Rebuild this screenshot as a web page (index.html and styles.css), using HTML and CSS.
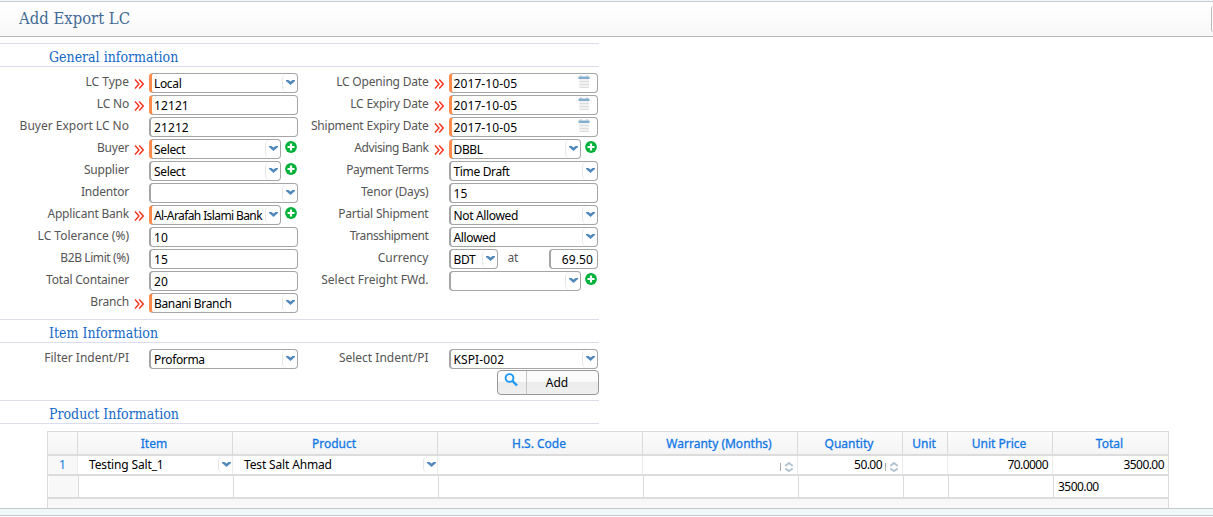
FILE: index.html
```
<!DOCTYPE html>
<html lang="en">
<head>
    <meta charset="UTF-8">
    <title>Add Export LC</title>
    <link rel="stylesheet" href="styles.css">
</head>
<body>

<!-- shared icons -->
<svg class="sprite">
    <symbol id="req" viewBox="0 0 10 10"><path d="M1 .5L5 5 1 9.500M5.200 .5l4 4.500-4 4.500" fill="none" stroke="#f8301c" stroke-width="1.400"/></symbol>
    <symbol id="arrow" viewBox="0 0 9 5"><path d="M0 0h2.500l2 1.500 2-1.500H9v1L4.500 5 0 1z" fill="#5289bd"/></symbol>
    <symbol id="plus" viewBox="0 0 12 12"><circle cx="6" cy="6" r="5.900" fill="#00b038"/><path d="M6 2.500v7M2.500 6h7" stroke="#fff" stroke-width="2.200"/></symbol>
    <symbol id="cal" viewBox="0 0 12 13"><path d="M1 3h10v10H1z" fill="#f1f1f1"/><path d="M.5 1.500h11V4H.5z" fill="#84afcc"/><path d="M2 .5h2v1H2zM8 .5h2v1H8z" fill="#a9bccb"/><path d="M2 6.500h9M2 9.500h9M2 12.500h9" stroke="#dcdddd"/></symbol>
    <symbol id="spin" viewBox="0 0 9 10"><path d="M.8 4L4.500 1l3.700 3M.8 6.500l3.700 2.500 3.700-2.500" fill="none" stroke="#b4c3d0" stroke-width="2"/></symbol>
</svg>

<div class="header">
    <h1>Add Export LC</h1>
    <span class="header-btn"></span>
</div>

<div class="form">
    <h2>General information</h2>
    <div class="columns">
        <div class="col">
            <div class="row"><label class="wide">LC Type</label><svg class="req"><use href="#req"/></svg><div class="field must"><span>Local</span><i class="drop"><svg><use href="#arrow"/></svg></i></div></div>
            <div class="row"><label>LC No</label><svg class="req"><use href="#req"/></svg><div class="field must num"><span>12121</span></div></div>
            <div class="row"><label class="wide">Buyer Export LC No</label><div class="field num"><span>21212</span></div></div>
            <div class="row"><label>Buyer</label><svg class="req"><use href="#req"/></svg><div class="field must short"><span>Select</span><i class="drop"><svg><use href="#arrow"/></svg></i></div><svg class="plus"><use href="#plus"/></svg></div>
            <div class="row"><label>Supplier</label><div class="field short"><span>Select</span><i class="drop"><svg><use href="#arrow"/></svg></i></div><svg class="plus"><use href="#plus"/></svg></div>
            <div class="row"><label>Indentor</label><div class="field"><span></span><i class="drop"><svg><use href="#arrow"/></svg></i></div></div>
            <div class="row"><label>Applicant Bank</label><svg class="req"><use href="#req"/></svg><div class="field must short tight"><span>Al-Arafah Islami Bank</span><i class="drop"><svg><use href="#arrow"/></svg></i></div><svg class="plus"><use href="#plus"/></svg></div>
            <div class="row"><label class="wide">LC Tolerance (%)</label><div class="field num"><span>10</span></div></div>
            <div class="row"><label class="narrow">B2B Limit (%)</label><div class="field num"><span>15</span></div></div>
            <div class="row"><label>Total Container</label><div class="field num"><span>20</span></div></div>
            <div class="row"><label>Branch</label><svg class="req"><use href="#req"/></svg><div class="field must"><span>Banani Branch</span><i class="drop"><svg><use href="#arrow"/></svg></i></div></div>
        </div>
        <div class="col">
            <div class="row"><label>LC Opening Date</label><svg class="req"><use href="#req"/></svg><div class="field must num"><span>2017-10-05</span><svg class="cal"><use href="#cal"/></svg></div></div>
            <div class="row"><label>LC Expiry Date</label><svg class="req"><use href="#req"/></svg><div class="field must num"><span>2017-10-05</span><svg class="cal"><use href="#cal"/></svg></div></div>
            <div class="row"><label>Shipment Expiry Date</label><svg class="req"><use href="#req"/></svg><div class="field must num"><span>2017-10-05</span><svg class="cal"><use href="#cal"/></svg></div></div>
            <div class="row"><label class="narrow">Advising Bank</label><svg class="req"><use href="#req"/></svg><div class="field must short"><span>DBBL</span><i class="drop"><svg><use href="#arrow"/></svg></i></div><svg class="plus"><use href="#plus"/></svg></div>
            <div class="row"><label class="narrow">Payment Terms</label><div class="field"><span>Time Draft</span><i class="drop"><svg><use href="#arrow"/></svg></i></div></div>
            <div class="row"><label>Tenor (Days)</label><div class="field num"><span>15</span></div></div>
            <div class="row"><label>Partial Shipment</label><div class="field"><span>Not Allowed</span><i class="drop"><svg><use href="#arrow"/></svg></i></div></div>
            <div class="row"><label class="narrow">Transshipment</label><div class="field"><span>Allowed</span><i class="drop"><svg><use href="#arrow"/></svg></i></div></div>
            <div class="row"><label class="wide">Currency</label><div class="field currency"><span>BDT</span><i class="drop"><svg><use href="#arrow"/></svg></i></div><label class="at">at</label><div class="field rate num"><span>69.50</span></div></div>
            <div class="row"><label class="wide">Select Freight FWd.</label><div class="field short"><span></span><i class="drop"><svg><use href="#arrow"/></svg></i></div><svg class="plus"><use href="#plus"/></svg></div>
        </div>
    </div>

    <h2>Item Information</h2>
    <div class="columns">
        <div class="col">
            <div class="row"><label class="wide">Filter Indent/PI</label><div class="field"><span>Proforma</span><i class="drop"><svg><use href="#arrow"/></svg></i></div></div>
        </div>
        <div class="col">
            <div class="row"><label class="wide">Select Indent/PI</label><div class="field num"><span>KSPI-002</span><i class="drop"><svg><use href="#arrow"/></svg></i></div></div>
        </div>
    </div>
    <button class="add">
        <span class="add-icon"><svg viewBox="0 0 14 14"><circle cx="5.500" cy="5" r="3.900" fill="none" stroke="#1c98f5" stroke-width="1.900"/><path d="M8.500 8l4.500 4.500" stroke="#1c98f5" stroke-width="2.400"/></svg></span>
        <span class="add-text">Add</span>
    </button>

    <h2>Product Information</h2>
</div>

<div class="grid">
    <div class="line head">
        <div></div><div>Item</div><div>Product</div><div>H.S. Code</div><div>Warranty (Months)</div><div>Quantity</div><div>Unit</div><div>Unit Price</div><div>Total</div>
    </div>
    <div class="line data">
        <div class="no">1</div>
        <div class="pick"><span>Testing Salt_1</span><i class="drop"><svg><use href="#arrow"/></svg></i></div>
        <div class="pick"><span>Test Salt Ahmad</span><i class="drop"><svg><use href="#arrow"/></svg></i></div>
        <div></div>
        <div class="amount"><svg class="spin"><use href="#spin"/></svg></div>
        <div class="amount">50.00<svg class="spin"><use href="#spin"/></svg></div>
        <div></div>
        <div class="amount">70.0000</div>
        <div class="amount">3500.00</div>
    </div>
    <div class="line sum">
        <div></div><div></div><div></div><div></div><div></div><div></div><div></div><div></div><div>3500.00</div>
    </div>
    <div class="pager"></div>
</div>
<div class="footer"></div>

</body>
</html>
```

FILE: styles.css
```
* {
    box-sizing: border-box;
}
body {
    margin: 0;
    height: 517px;
    overflow: hidden;
    background: #fff;
    font-family: "Noto Sans", sans-serif;
    font-size: 12px;
    color: #000;
}
.sprite {
    display: none;
}
svg {
    display: block;
    flex: none;
}
h1, h2 {
    margin: 0;
    font-family: "DejaVu Serif Condensed", "DejaVu Serif", serif;
    font-stretch: condensed;
    font-weight: normal;
}
.header {
    display: flex;
    justify-content: space-between;
    height: 37px;
    border-top: 1px solid #eff8fa;
    border-bottom: 1px solid #b9b9bb;
    background: linear-gradient(#c5cdd0 1px, #fff 1px, #f8f8f9);
}
h1 {
    padding-left: 19px;
    font-size: 16.5px;
    line-height: 35px;
    color: #436a94;
}
.header-btn {
    width: 2px;
    height: 26px;
    margin-top: 5px;
    border-left: 1px solid #bbb;
    border-radius: 4px 0 0 4px;
}

/* form */
.form {
    width: 599px;
    padding-top: 6px;
}
h2 {
    height: 24px;
    padding-left: 49px;
    border-top: 1px solid #dcdcec;
    border-bottom: 1px solid #dcdcec;
    font-size: 14px;
    line-height: 26px;
    color: #1468c7;
}
.columns {
    display: flex;
    padding: 6px 0 4px;
}
.col {
    width: 300px;
}
.row {
    display: flex;
    height: 22px;
}
.row label {
    width: 129px;
    margin-right: 20px;
    text-align: right;
    white-space: nowrap;
    line-height: 18px;
    letter-spacing: -0.2px;
    color: #555;
}
.row .wide {
    letter-spacing: 0;
}
.row .narrow {
    letter-spacing: -0.4px;
}
.req {
    width: 10px;
    height: 10px;
    margin: 6px 5px 0 -15px;
}
.field {
    display: flex;
    width: 149px;
    height: 20px;
    border: 1px solid #a5a5a8;
    border-left-width: 2px;
    border-radius: 4px;
    background: #fff;
    overflow: hidden;
    letter-spacing: -0.35px;
}
.field span {
    flex: 1;
    padding-left: 3px;
    overflow: hidden;
    white-space: nowrap;
    line-height: 19px;
}
.num {
    letter-spacing: 0.1px;
}
.tight {
    letter-spacing: -0.6px;
}
.must {
    border-left: 3px solid #ff8c4c;
}
.must span {
    padding-left: 2px;
}
.short {
    width: 132px;
}
.currency {
    width: 49px;
}
.row .at {
    width: auto;
    margin: 0 auto 0 10px;
}
.rate {
    width: 49px;
    margin-right: 1px;
    text-align: right;
}
.rate span {
    padding-right: 4px;
}
.drop {
    display: flex;
    width: 15px;
    height: 18px;
    padding: 6px 0 0 3px;
    border-left: 1px solid #e6e6e6;
    border-radius: 5px 0 0 5px;
}
.drop svg {
    width: 9px;
    height: 5px;
}
.cal {
    width: 12px;
    height: 13px;
    margin: 1px 7px 0 0;
}
.plus {
    width: 12px;
    height: 12px;
    margin: 2px 0 0 4px;
}
.add {
    display: flex;
    width: 102px;
    height: 25px;
    margin: -5px 0 5px auto;
    padding: 0;
    border: 1px solid #98989a;
    border-radius: 4px;
    background: linear-gradient(#fbfbfb 45%, #ececec 50%, #efefef);
    font: 12px "Noto Sans", sans-serif;
    color: #000;
}
.add-icon {
    width: 29px;
    height: 23px;
    padding: 2px 0 0 6px;
    border-right: 1px solid #c6c6c6;
}
.add-icon svg {
    width: 14px;
    height: 14px;
}
.add-text {
    width: 60px;
    line-height: 23px;
}

/* product grid */
.grid {
    width: 1122px;
    height: 77px;
    margin: 7px 0 0 47px;
    border: 1px solid #dadada;
    border-bottom: 0;
}
.line {
    display: grid;
    grid-template-columns: 30px 155px 205px 205px 155px 105px 45px 105px 115px;
    border-bottom: 2px solid #dcdcdc;
}
.line div {
    border-right: 1px solid #dadada;
}
.line div:last-child {
    border-right: 0;
}
.head {
    height: 24px;
    background: linear-gradient(#fbfbfb, #f4f4f4);
    text-align: center;
    line-height: 24px;
    color: #1177e6;
    -webkit-text-stroke: 0.3px #1177e6;
}
.head div {
    padding-right: 2px;
}
.data {
    height: 20px;
    line-height: 18px;
}
.data div {
    border-right-color: #ececec;
}
.data .no {
    background: #f8f8f8;
    text-align: center;
    line-height: 17px;
    color: #1177e6;
}
.pick {
    display: flex;
}
.pick span {
    flex: 1;
    padding-left: 11px;
    letter-spacing: -0.15px;
}
.pick .drop {
    width: 14px;
    height: 17px;
}
.amount {
    display: flex;
    justify-content: flex-end;
    padding-right: 4px;
    letter-spacing: -0.55px;
}
.spin {
    width: 14px;
    height: 10px;
    margin: 6px -1px 0 3px;
    padding-left: 4px;
    background: linear-gradient(#aaa, #aaa) 0 1px / 1px 8px no-repeat;
}
.sum {
    height: 23px;
    padding-left: 1px;
    line-height: 21px;
    letter-spacing: -0.55px;
}
.sum div:first-child {
    background: #f8f8f8;
}
.sum div:last-child {
    padding-left: 4px;
}
.pager {
    height: 9px;
    background: #f8f8f8;
}
.footer {
    height: 8px;
    border-top: 1px solid #c3c9cb;
    border-bottom: 1px solid #c3c9cb;
    background: #eff7f9;
}
```
